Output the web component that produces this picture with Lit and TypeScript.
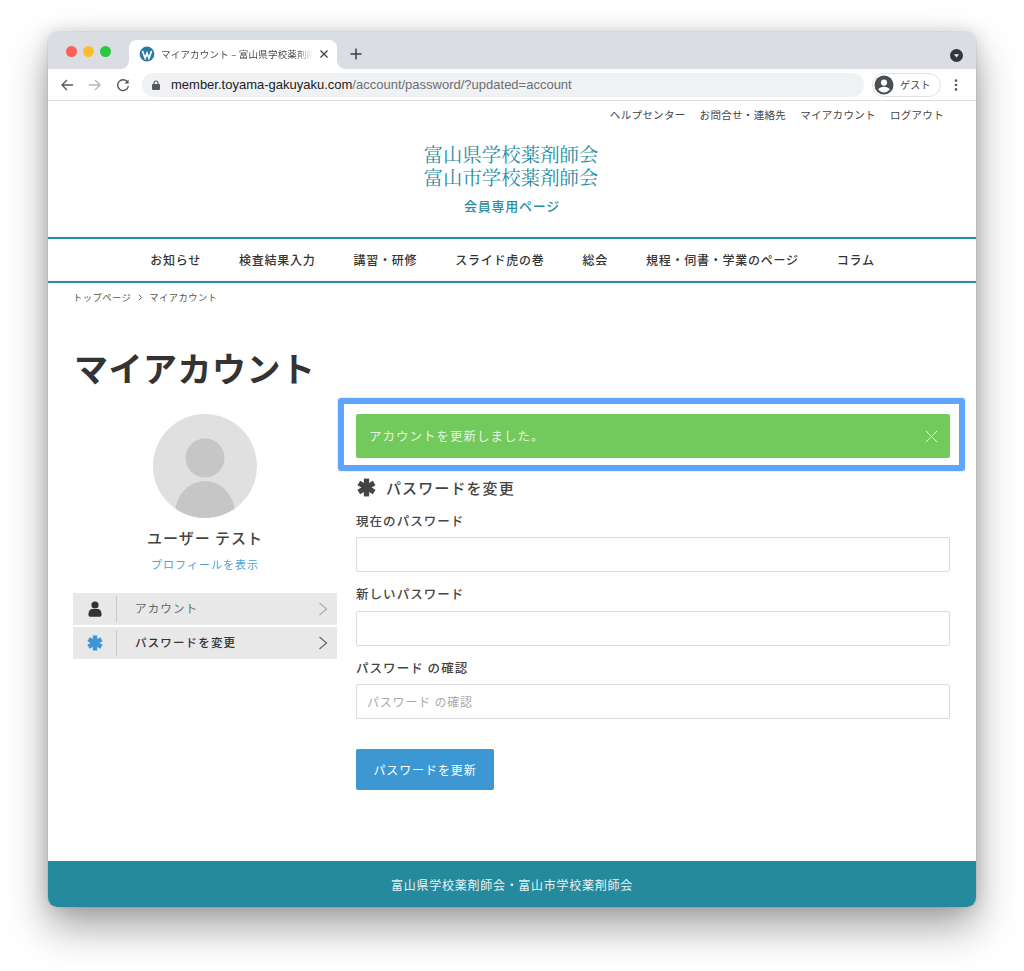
import { LitElement, html, css, svg } from "lit";
import { customElement } from "lit/decorators.js";

const asterisk = (size: number, color: string) => svg`<svg width="${size}" height="${size}" viewBox="0 0 20 20"><g stroke="${color}" stroke-width="5.6"><path d="M10 .6v18.8"/><path d="M1.9 5.3l16.2 9.4"/><path d="M18.1 5.3L1.9 14.7"/></g></svg>`;

@customElement("app-root")
export class AppRoot extends LitElement {
  static styles = css`
    :host { display: block; width: 1024px; height: 971px; box-sizing: border-box; padding: 32px 48px 64px; background: #fff; overflow: hidden;
      font-family: "Noto Sans CJK JP", "Liberation Sans", sans-serif; color: #333; }
    * { box-sizing: border-box; }
    .window { height: 875px; border-radius: 9px; display: flex; flex-direction: column; background: #fff; overflow: hidden; position: relative; }
    .shadow { box-shadow: 0 20px 42px rgba(0,0,0,.36), 0 0 1px rgba(0,0,0,.45), 0 0 18px rgba(0,0,0,.14); border-radius: 9px; height: 875px; }
    .tabbar { height: 37px; background: #dadde2; display: flex; align-items: flex-end; flex: none; }
    .lights { display: flex; gap: 6.2px; padding: 2px 0 0 18px; width: 81px; flex: none; align-self: flex-end; height: 25px; }
    .lights i { width: 11px; height: 11px; border-radius: 50%; display: block; }
    .tab { width: 208px; height: 29px; background: #fff; border-radius: 8px 8px 0 0; display: flex; align-items: center; padding: 0 8px 1px 10px; gap: 6px; position: relative; flex: none; }
    .tab::before, .tab::after { content: ""; position: absolute; bottom: 0; width: 8px; height: 8px; background: radial-gradient(circle at 0 0, transparent 7.5px, #fff 8px); }
    .tab::before { left: -8px; }
    .tab::after { right: -8px; background: radial-gradient(circle at 100% 0, transparent 7.5px, #fff 8px); }
    .tab-title { flex: 1; font-size: 9.5px; color: #45484d; white-space: nowrap; overflow: hidden; letter-spacing: .2px; -webkit-mask-image: linear-gradient(90deg, #000 88%, transparent); mask-image: linear-gradient(90deg, #000 88%, transparent); }
    .plus { margin: 0 0 9px 13px; display: block; }
    .profile-dot { margin: 0 13px 7px auto; display: block; }
    .toolbar { height: 32px; background: #fff; border-bottom: 1px solid #dcdcdc; display: flex; align-items: center; flex: none; padding: 0 12px 0 5px; }
    .nav-ic { width: 28px; display: flex; justify-content: center; flex: none; }
    .omni { width: 722px; height: 24px; margin-left: 5px; border-radius: 12px; background: #eff1f3; display: flex; align-items: center; padding-left: 10px; gap: 11px; font: 13px "Liberation Sans", sans-serif; color: #6b6e73; flex: none; }
    .omni b { font-weight: 400; color: #202124; }
    .chip { margin-left: 8px; width: 69px; height: 24px; border: 1px solid #dfe1e5; border-radius: 12px; display: flex; align-items: center; padding-left: 1px; gap: 6px; font-size: 10px; letter-spacing: .2px; color: #3c4043; flex: none; }
    .dots { margin-left: 13px; display: block; flex: none; }

    .toplinks { display: flex; justify-content: flex-end; gap: 14px; padding: 7px 32px 0 0; font-size: 10.5px; letter-spacing: .32px; line-height: 14px; color: #444; flex: none; }
    .brand { height: 115px; flex: none; text-align: center; color: #2b8da1; padding: 21px 2px 0 0; }
    .brand h2 { margin: 0; font: 400 19.4px/23px "Noto Serif CJK JP", "Noto Sans CJK JP", serif; letter-spacing: .05px; }
    .brand p { margin: 8px 0 0; padding-left: 2px; font-size: 13px; line-height: 18px; font-weight: 500; letter-spacing: .75px; }
    .mainnav { height: 46px; flex: none; border-top: 2px solid #2b8da1; border-bottom: 2px solid #2b8da1; display: flex; justify-content: center; align-items: center; gap: 38px; font-size: 12px; font-weight: 500; letter-spacing: .75px; color: #333; padding: 0 0 1px 1px; }
    .crumbs { display: flex; align-items: center; gap: 6.5px; padding: 8px 0 0 25px; font-size: 9.3px; letter-spacing: .45px; line-height: 13px; color: #555; flex: none; }
    h1 { margin: 0; padding: 41px 0 0 26px; font-size: 34px; line-height: 46px; letter-spacing: .5px; font-weight: 700; color: #333; flex: none; }
    .cols { display: flex; flex: 1; padding: 23px 26px 0 25px; gap: 19px; }
    .side { width: 264px; flex: none; display: flex; flex-direction: column; align-items: center; }
    .avatar { display: block; margin-top: 0; }
    .name { margin-top: 10px; font-size: 15px; line-height: 20px; font-weight: 500; letter-spacing: 1px; color: #444; white-space: pre; }
    .profile { margin-top: 8px; font-size: 11px; line-height: 16px; letter-spacing: 1px; color: #4aa3dc; }
    .menu { margin-top: 21px; width: 100%; display: flex; flex-direction: column; gap: 2px; }
    .row { height: 32px; background: #e8e8e8; display: flex; align-items: center; font-size: 11.5px; letter-spacing: 1.15px; color: #666; }
    .row.on { color: #333; font-weight: 500; }
    .row .ic { width: 44px; height: 26px; border-right: 1px solid #c9c9c9; display: flex; align-items: center; justify-content: center; flex: none; }
    .row span { flex: 1; padding: 0 0 2px 18px; }
    .row svg.chev { margin-right: 9px; }
    .main { flex: 1; min-width: 0; }
    .alert { position: relative; height: 44px; background: #72c95c; border-radius: 2px; color: #e6f5df; font-size: 12.5px; letter-spacing: 1px; display: flex; align-items: center; justify-content: space-between; padding: 0 12px 0 13px; }
    .alert span { padding-bottom: 2px; }
    .alert::after { content: ""; position: absolute; left: -18px; right: -15px; top: -16px; bottom: -13px; border: 6px solid #60a5fb; border-radius: 3px; box-shadow: 0 0 2px rgba(0,0,0,.25); pointer-events: none; }
    h3 { margin: 19.5px 0 0; display: flex; align-items: center; gap: 10px; font-size: 15px; line-height: 20px; font-weight: 500; letter-spacing: 1.1px; color: #444; }
    h3 svg { margin-left: 1px; }
    label { display: block; margin-top: 13px; font-size: 12.5px; line-height: 18.5px; letter-spacing: 1.05px; font-weight: 500; color: #444; }
    h3 + label { margin-top: 14px; }
    .input { height: 35px; margin-top: 7px; border: 1px solid #dcdcdc; border-radius: 2px; background: #fff; font-size: 12px; color: #aaa; padding: 0 10px; display: flex; align-items: center; letter-spacing: .8px; white-space: pre; }
    .btn { width: 138px; height: 41px; margin-top: 30px; background: #3c97d3; border-radius: 2px; color: #fff; font-size: 12px; letter-spacing: .9px; display: flex; align-items: center; justify-content: center; }
    footer { height: 46px; flex: none; background: #268a9e; color: #e8f3f5; font-size: 12px; letter-spacing: .74px; display: flex; align-items: center; justify-content: center; }
  `;

  render() {
    return html`
      <div class="shadow"><div class="window">
        <div class="tabbar">
          <div class="lights">
            <i style="background:#ff5f57"></i><i style="background:#febc2e"></i><i style="background:#28c840"></i>
          </div>
          <div class="tab">
            <svg width="16" height="16" viewBox="0 0 16 16" style="flex:none">
              <circle cx="8" cy="8" r="7.4" fill="#2a7ba3"/>
              <path d="M3.4 5l2.7 7.2 1.9-5 1.9 5L12.6 5" fill="none" stroke="#fff" stroke-width="1.7"/>
            </svg>
            <div class="tab-title">マイアカウント – 富山県学校薬剤師会</div>
            <svg width="10" height="10" viewBox="0 0 10 10" style="flex:none"><path d="M1.5 1.5l7 7M8.5 1.5l-7 7" stroke="#3c4043" stroke-width="1.3"/></svg>
          </div>
          <svg class="plus" width="12" height="12" viewBox="0 0 12 12"><path d="M6 .5v11M.5 6h11" stroke="#3c4043" stroke-width="1.5"/></svg>
          <svg class="profile-dot" width="13" height="13" viewBox="0 0 13 13"><circle cx="6.5" cy="6.5" r="6.5" fill="#33363a"/><path d="M3.8 5.2h5.4L6.5 8.6z" fill="#e8eaed"/></svg>
        </div>
        <div class="toolbar">
          <div class="nav-ic"><svg width="14" height="14" viewBox="0 0 14 14"><path d="M13 7H2M7 2L2 7l5 5" fill="none" stroke="#55585c" stroke-width="1.4"/></svg></div>
          <div class="nav-ic"><svg width="14" height="14" viewBox="0 0 14 14"><path d="M1 7h11M7 2l5 5-5 5" fill="none" stroke="#b4b6b9" stroke-width="1.4"/></svg></div>
          <div class="nav-ic"><svg width="14" height="14" viewBox="0 0 14 14"><path d="M11.6 4.2A5.4 5.4 0 1 0 12.4 8" fill="none" stroke="#55585c" stroke-width="1.4"/><path d="M12.6 1.4v4.2H8.4z" fill="#55585c"/></svg></div>
          <div class="omni">
            <svg width="8" height="10" viewBox="0 0 8 10" style="flex:none"><rect x="0" y="4" width="8" height="6" rx="1" fill="#55585c"/><path d="M2 4.5V3a2 2 0 0 1 4 0v1.5" fill="none" stroke="#55585c" stroke-width="1.1"/></svg>
            <div><b>member.toyama-gakuyaku.com</b>/account/password/?updated=account</div>
          </div>
          <div class="chip">
            <svg width="20" height="20" viewBox="0 0 20 20" style="flex:none"><circle cx="10" cy="10" r="9.5" fill="#4b4e53"/><circle cx="10" cy="7.6" r="3.1" fill="#fff"/><path d="M4.2 14.6c1.2-2.1 3.3-2.9 5.8-2.9s4.6.8 5.8 2.9a7.4 7.4 0 0 1-11.6 0z" fill="#fff"/></svg>
            <span>ゲスト</span>
          </div>
          <svg class="dots" width="4" height="12" viewBox="0 0 4 12"><circle cx="2" cy="1.6" r="1.3" fill="#55585c"/><circle cx="2" cy="6" r="1.3" fill="#55585c"/><circle cx="2" cy="10.4" r="1.3" fill="#55585c"/></svg>
        </div>

        <div class="toplinks"><span>ヘルプセンター</span><span>お問合せ・連絡先</span><span>マイアカウント</span><span>ログアウト</span></div>
        <div class="brand">
          <h2>富山県学校薬剤師会<br />富山市学校薬剤師会</h2>
          <p>会員専用ページ</p>
        </div>
        <nav class="mainnav"><span>お知らせ</span><span>検査結果入力</span><span>講習・研修</span><span>スライド虎の巻</span><span>総会</span><span>規程・伺書・学業のページ</span><span>コラム</span></nav>
        <div class="crumbs"><span>トップページ</span><svg width="5" height="7" viewBox="0 0 5 7"><path d="M1 .8l2.6 2.7L1 6.2" fill="none" stroke="#555" stroke-width="1"/></svg><span>マイアカウント</span></div>
        <h1>マイアカウント</h1>
        <div class="cols">
          <aside class="side">
            <svg class="avatar" width="104" height="104" viewBox="0 0 104 104">
              <defs><clipPath id="av"><circle cx="52" cy="52" r="52"/></clipPath></defs>
              <circle cx="52" cy="52" r="52" fill="#e0e0e0"/>
              <g clip-path="url(#av)" fill="#c6c6c6"><circle cx="52" cy="44" r="19.5"/><ellipse cx="52" cy="100" rx="30" ry="33"/></g>
            </svg>
            <div class="name">ユーザー テスト</div>
            <div class="profile">プロフィールを表示</div>
            <div class="menu">
              <div class="row">
                <div class="ic"><svg width="14" height="16" viewBox="0 0 14 16"><circle cx="7" cy="4" r="3.6" fill="#333"/><path d="M.4 13.5C.4 9.8 2.4 8 4.2 8h5.6c1.8 0 3.8 1.8 3.8 5.5 0 1.5-1 2.3-2.2 2.3H2.6C1.4 15.8.4 15 .4 13.5z" fill="#333"/></svg></div>
                <span>アカウント</span>
                <svg class="chev" width="10" height="14" viewBox="0 0 10 14"><path d="M1.5 1l7 6-7 6" fill="none" stroke="#aaa" stroke-width="1.2"/></svg>
              </div>
              <div class="row on">
                <div class="ic">${asterisk(16, "#3c97d3")}</div>
                <span>パスワードを変更</span>
                <svg class="chev" width="10" height="14" viewBox="0 0 10 14"><path d="M1.5 1l7 6-7 6" fill="none" stroke="#666" stroke-width="1.2"/></svg>
              </div>
            </div>
          </aside>
          <main class="main">
            <div class="alert">
              <span>アカウントを更新しました。</span>
              <svg width="13" height="13" viewBox="0 0 13 13"><path d="M.8.8l11.4 11.4M12.2.8L.8 12.2" stroke="#eef8ea" stroke-width="1"/></svg>
            </div>
            <h3>${asterisk(19, "#444")}<span>パスワードを変更</span></h3>
            <label>現在のパスワード</label>
            <div class="input"></div>
            <label>新しいパスワード</label>
            <div class="input"></div>
            <label>パスワード の確認</label>
            <div class="input">パスワード の確認</div>
            <div class="btn">パスワードを更新</div>
          </main>
        </div>
        <footer>富山県学校薬剤師会・富山市学校薬剤師会</footer>
      </div></div>
    `;
  }
}
